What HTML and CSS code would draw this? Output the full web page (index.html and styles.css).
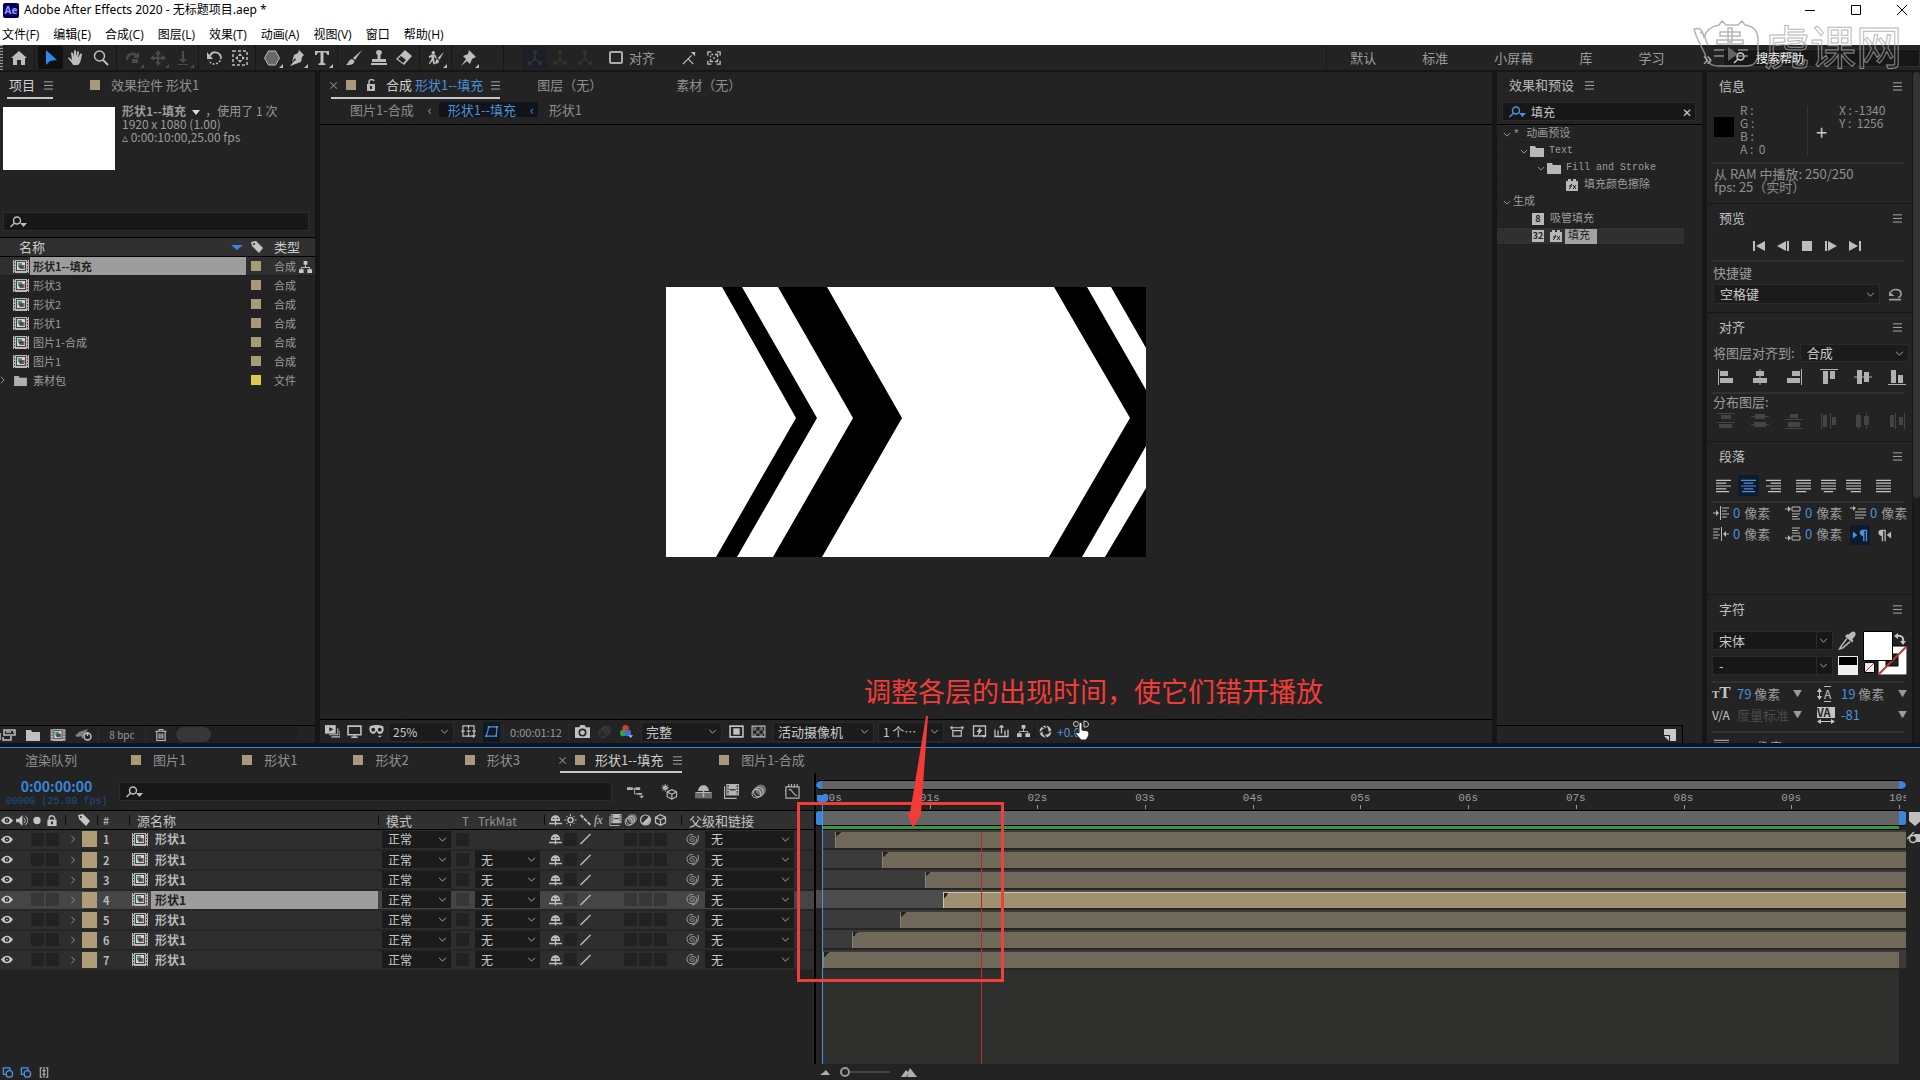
FILE: index.html
```html
<!DOCTYPE html>
<html lang="zh-CN">
<head>
<meta charset="utf-8">
<title>Adobe After Effects 2020 - 无标题项目.aep *</title>
<link rel="stylesheet" href="styles.css">
</head>
<body>
<svg class="defs" aria-hidden="true">
  <symbol id="home" viewBox="0 0 16 16"><path d="M8 1 0 8h2v7h4v-5h4v5h4V8h2z"/></symbol>
  <symbol id="arrow" viewBox="0 0 16 16"><path d="M3 0v15l4-4 7-1z"/></symbol>
  <symbol id="hand" viewBox="0 0 16 16"><path d="M5 15C4 12 1 10 0 8c1-1 2 0 4 2L3 3c0-1 1-1 2 0l1 4V1c0-1 2-1 2 0v6l1-5c0-1 2-1 2 0l-1 6 2-4c1-1 2 0 2 1-1 3-1 8-4 10z"/></symbol>
  <symbol id="zoom" viewBox="0 0 16 16"><g fill="none" stroke="currentColor"><circle cx="6.500" cy="6" r="5" stroke-width="1.500"/><path d="m10 10 5 5" stroke-width="2"/></g></symbol>
  <symbol id="orbit" viewBox="0 0 16 16"><path d="M1 10C0 4 7 0 12 4l2-2v6H8l2-2C6 4 3 6 3 10zM7 9h6v4H7z"/></symbol>
  <symbol id="track" viewBox="0 0 16 16"><path d="m8 0 3 4H9v3h3V5l4 3-4 3V9H9v3h2l-3 4-3-4h2V9H4v2L0 8l4-3v2h3V4H5z"/></symbol>
  <symbol id="dolly" viewBox="0 0 16 16"><path d="M7 1h2v8h3l-4 4-4-4h3zM3 14h10v1H3z"/></symbol>
  <symbol id="rotate" viewBox="0 0 16 16"><path d="M3 6C5 1 12 1 14 7" fill="none" stroke="currentColor" stroke-width="2"/><path d="M14 7c0 5-4 7-7 7-2 0-4-1-5-4" fill="none" stroke="currentColor" stroke-width="1.500" stroke-dasharray="2 1.500"/><path d="M0 2v7h6z"/></symbol>
  <symbol id="panbehind" viewBox="0 0 16 16"><rect x="1" y="1" width="14" height="14" fill="none" stroke="currentColor" stroke-width="1.500" stroke-dasharray="3 2"/><path d="m8 3 2 3H6zM8 13l2-3H6zM3 8l3-2v4zM13 8l-3-2v4z"/></symbol>
  <symbol id="hex" viewBox="0 0 16 16"><path d="M4.500 1h7L15.500 8l-4 7h-7L.5 8z" fill="#686868" stroke="currentColor"/></symbol>
  <symbol id="pen" viewBox="0 0 16 16"><path d="m10 0 5 5-2 2-1 5-11 4 4-5 2-1-1-2-3 4 2-7 4-2z"/></symbol>
  <symbol id="type" viewBox="0 0 16 16"><path d="M1 1h14v4h-1.500L12 2.500H9.500V13l2 .500V15h-7v-1.500l2-.500V2.500H4L2.500 5H1z"/></symbol>
  <symbol id="brush" viewBox="0 0 16 16"><path d="M16 0 9 10 7 8zM6 9l2.500 2C8 15 4 15 0 15c3-2 2-5 6-6z"/></symbol>
  <symbol id="stamp" viewBox="0 0 16 16"><path d="M8 0c3 0 4 3 1.500 5v4H15v3H1V9h5.500V5C4 3 5 0 8 0zM0 13h16v2H0z"/></symbol>
  <symbol id="eraser" viewBox="0 0 16 16"><path d="m9 0 7 6-8 9-8-6zm-7 9 5 4 3-3-5-4z" fill-rule="evenodd"/></symbol>
  <symbol id="roto" viewBox="0 0 18 16"><circle cx="6" cy="2" r="2"/><path d="M4 4h4l2 4-1 1-2-3v4l1 5H6l-1-4-3 4-1-1 3-5V7L1 8V6zM18 1l-5 9-2-2zM10 9l2.500 2c0 3-3 4-5 3 1-1 1-4 2.500-5z"/></symbol>
  <symbol id="pin" viewBox="0 0 16 16"><path d="m9 0 7 7-2 1-2 1-2 5-3-3-6 5 5-7-3-3 5-2z"/></symbol>
  <symbol id="axis" viewBox="0 0 16 16"><path d="M8 1v8M8 9l-6 5M8 9l6 5M6 3l2-2 2 2M2 11v3h3M14 11v3h-3" fill="none" stroke="currentColor" stroke-width="1.500"/></symbol>
  <symbol id="snap1" viewBox="0 0 16 16"><path d="m1 15 6-6 6 6M7 9l4-4" fill="none" stroke="currentColor" stroke-width="1.500"/><path d="M10 1h5v5z"/></symbol>
  <symbol id="snap2" viewBox="0 0 16 16"><path d="M1 5V1h4M11 1h4v4M15 11v4h-4M5 15H1v-4M4 5v2M5 4h2M9 4h3v3M4 9v3h3M12 9v3H9M7 8h2" fill="none" stroke="currentColor" stroke-width="1.500"/></symbol>
  <symbol id="menu" viewBox="0 0 10 10"><path d="M0 1.500h10M0 5.500h10M0 9.500h10" stroke="currentColor"/></symbol>
  <symbol id="chev" viewBox="0 0 10 6"><path d="m1 1 4 4 4-4" fill="none" stroke="currentColor" stroke-width="1.200"/></symbol>
  <symbol id="right" viewBox="0 0 6 10"><path d="m1 1 4 4-4 4" fill="none" stroke="currentColor" stroke-width="1.200"/></symbol>
  <symbol id="search" viewBox="0 0 18 12"><circle cx="7" cy="4.500" r="3.500" fill="none" stroke="currentColor" stroke-width="1.500"/><path d="m4.500 7-4 4" stroke="currentColor" stroke-width="1.500"/><path d="M10 7h7l-3.500 4z"/></symbol>
  <symbol id="lock" viewBox="0 0 10 12"><path d="M0 5h10v7H0z"/><path d="M2 5V3c0-3 5-3 6 0v2" fill="none" stroke="currentColor" stroke-width="1.500"/><path d="M4 7h2v3H4z" fill="#222"/></symbol>
  <symbol id="unlock" viewBox="0 0 10 12"><path d="M1 5h8v7H1z"/><path d="M3 5V3c0-3 4-3 5-1" fill="none" stroke="currentColor" stroke-width="1.500"/><path d="M4 7h2v3H4z" fill="#222"/></symbol>
  <symbol id="tag" viewBox="0 0 12 12"><path d="M0 1 5 0l7 7-4 5-7-7z"/><circle cx="3" cy="3" r="1" fill="#222"/></symbol>
  <symbol id="comp" viewBox="0 0 16 13"><path fill="#b9b9b9" d="M0 0h16v13H0z"/><path d="M1.500 0v13M14.500 0v13" stroke="#333" stroke-dasharray="1.500 1.500"/><path fill="#444" d="M3 1h10v10H3z"/><path fill="#d4d4d4" d="M4 2h8v8H4z"/><path fill="#4d8f88" d="M5 3h4v4H5z"/><path fill="#a4503f" d="M9 5h2.500v4H9z"/><circle cx="8" cy="7" r="2" fill="#35544f"/></symbol>
  <symbol id="folder" viewBox="0 0 14 12"><path d="M0 1h5l1 2h8v9H0z"/></symbol>
  <symbol id="flow" viewBox="0 0 14 14"><path d="M5 0h4v4H5zM0 9h5v4H0zM9 9h5v4H9z"/><path d="M7 4v3M2.500 9V7h9v2" fill="none" stroke="currentColor"/></symbol>
  <symbol id="interpret" viewBox="0 0 16 12"><path d="M4 1h11v5H4zM6 3h5M13 3h1M0 4v7M3 8v3h8V7" fill="none" stroke="currentColor" stroke-width="1.500"/></symbol>
  <symbol id="rocket" viewBox="0 0 18 12"><path d="M0 7 4 3l9-3-4 6-2 4-1-3-3 1z" opacity=".6"/><circle cx="12.500" cy="7.500" r="3.500" fill="none" stroke="currentColor" stroke-width="1.500"/><path d="M12.500 3v4" stroke="currentColor" stroke-width="1.500"/></symbol>
  <symbol id="trash" viewBox="0 0 12 13"><path d="M0 2.500h12M4 2V.5h4V2M1.500 3v9.500h9V3M4 5v5.500M6 5v5.500M8 5v5.500" fill="none" stroke="currentColor" stroke-width="1.200"/></symbol>
  <symbol id="frames" viewBox="0 0 14 12"><path d="M0 0h10v8H0z"/><path d="m4 2 4 2-4 2z" fill="#222"/><path d="M12 3v6H4M14 5v6H6" fill="none" stroke="currentColor"/></symbol>
  <symbol id="monitor" viewBox="0 0 14 12"><path d="M1 1h12v8H1zM4 11.500h6M7 9v2" fill="none" stroke="currentColor" stroke-width="1.500"/></symbol>
  <symbol id="goggles" viewBox="0 0 16 13"><path d="M1 1c4-2 10-2 14 0 2 5-1 9-5 8L8 6 6 9C2 9-1 6 1 1z"/><circle cx="4.500" cy="4.500" r="2" fill="#222"/><circle cx="11.500" cy="4.500" r="2" fill="#222"/><path d="M9 11h5l-2.500 2z"/></symbol>
  <symbol id="grid" viewBox="0 0 16 14"><path d="M2 1h12v11H2zM8 0v4M8 9v4M0 6.500h4M12 6.500h4M6 6.500h4M8 5v3" fill="none" stroke="currentColor" stroke-width="1.300"/><path d="M11 11h5l-2.500 3z"/></symbol>
  <symbol id="mask" viewBox="0 0 16 14"><path d="M5 2h9l-1 10H2C4 9 4 5 5 2z" fill="none" stroke="currentColor" stroke-width="1.300"/><path d="M4 1h2v2H4zM13 1h2v2h-2zM1 11h2v2H1zM12 11h2v2h-2z"/></symbol>
  <symbol id="camera" viewBox="0 0 14 12"><path d="M0 2h4l1-2h4l1 2h4v10H0z"/><circle cx="7" cy="7" r="3" fill="none" stroke="#222" stroke-width="1.500"/></symbol>
  <symbol id="rgb" viewBox="0 0 14 14"><circle cx="6" cy="3.500" r="3.500" fill="#d33a30"/><circle cx="3.500" cy="8.500" r="3.500" fill="#35a04a"/><circle cx="8.500" cy="8.500" r="3.500" fill="#3c70d8"/><path d="M9 11h5l-2.500 3z"/></symbol>
  <symbol id="roi" viewBox="0 0 14 12"><path d="M1 1h12v10H1z" fill="none" stroke="currentColor" stroke-width="1.500"/><path d="M4 3h6v6H4z"/></symbol>
  <symbol id="checker" viewBox="0 0 14 12"><path d="M1 1h12v10H1z" fill="none" stroke="currentColor"/><path d="M2 2h3v3H2zM8 2h3v3H8zM5 5h3v3H5zM2 8h3v3H2zM8 8h3v3H8zM11 5h2v3h-2z" opacity=".5"/></symbol>
  <symbol id="par" viewBox="0 0 16 12"><path d="M0 2h15M3 5h9v6H3zM2 0v4M13 0v4" fill="none" stroke="currentColor" stroke-width="1.300"/></symbol>
  <symbol id="fast" viewBox="0 0 14 13"><path d="M1 1h12v10H1z" fill="none" stroke="currentColor" stroke-width="1.300"/><path d="M8 2 4 7h2l-1 4 5-6H8zM9 10h5l-2.500 3z"/></symbol>
  <symbol id="chart" viewBox="0 0 15 12"><path d="M1 4v7h13V4M4 10V5M7.500 8V0M11 10V5M5.500 2l2-2 2 2" fill="none" stroke="currentColor" stroke-width="1.300"/></symbol>
  <symbol id="aperture" viewBox="0 0 12 12"><circle cx="6" cy="6" r="4.200" fill="none" stroke="currentColor" stroke-width="2.500"/><path d="m6 0 2 4M12 5 8 8M7 12 4 8M0 8l4-4M2 1l5 3" stroke="#222"/></symbol>
  <symbol id="preset" viewBox="0 0 12 12"><path d="M0 2h2V0h3v2h2V0h3v2h2v10H0z"/><path d="M3 10c2 0 1-5 3-5M3 7h3M7 6l3 4M10 6l-3 4" fill="none" stroke="#222"/></symbol>
  <symbol id="newcomp" viewBox="0 0 12 12"><path d="M0 0h12v12H6V6H0z"/><path d="M0 7h5v5z"/></symbol>
  <symbol id="first" viewBox="0 0 12 10"><path d="M0 0h2v10H0zM12 0v10L3 5z"/></symbol>
  <symbol id="prev" viewBox="0 0 12 10"><path d="M9 0v10L0 5zM10 0h2v10h-2z"/></symbol>
  <symbol id="next" viewBox="0 0 12 10"><path d="M0 0h2v10H0zM3 0v10l9-5z"/></symbol>
  <symbol id="last" viewBox="0 0 12 10"><path d="M0 0v10l9-5zM10 0h2v10h-2z"/></symbol>
  <symbol id="reset" viewBox="0 0 14 13"><path d="M2 4c2-4 11-4 11 2 0 2-1 3-3 4M0 12h13" fill="none" stroke="currentColor" stroke-width="1.700"/><path d="M0 3v5h6z"/></symbol>
  <symbol id="al" viewBox="0 0 18 18"><path d="M1 1h1v16H1zM3 3h8v5H3zM3 10h13v5H3z"/></symbol>
  <symbol id="ac" viewBox="0 0 18 18"><path d="M8.500 1h1v16h-1zM5 3h8v5H5zM2 10h14v5H2z"/></symbol>
  <symbol id="ar" viewBox="0 0 18 18"><path d="M16 1h1v16h-1zM7 3h8v5H7zM2 10h13v5H2z"/></symbol>
  <symbol id="at" viewBox="0 0 18 18"><path d="M0 1h18v1H0zM3 3h5v13H3zM10 3h5v8h-5z"/></symbol>
  <symbol id="am" viewBox="0 0 18 18"><path d="M0 8.500h18v1H0zM3 2h5v14H3zM10 4h5v10h-5z"/></symbol>
  <symbol id="ab" viewBox="0 0 18 18"><path d="M0 16h18v1H0zM3 2h5v13H3zM10 7h5v8h-5z"/></symbol>
  <symbol id="dv" viewBox="0 0 18 18"><path d="M0 1h18v1H0zM4 3h10v4H4zM0 10h18v1H0zM2 12h13v4H2z"/></symbol>
  <symbol id="dm" viewBox="0 0 18 18"><path d="M0 4h18v1H0zM4 2h10v5H4zM0 12h18v1H0zM3 10h12v5H3z"/></symbol>
  <symbol id="db" viewBox="0 0 18 18"><path d="M0 7h18v1H0zM5 2h8v4H5zM0 16h18v1H0zM3 10h12v5H3z"/></symbol>
  <symbol id="dh" viewBox="0 0 18 18"><path d="M1 1h1v16H1zM3 3h4v12H3zM10 1h1v16h-1zM12 5h4v8h-4z"/></symbol>
  <symbol id="dc" viewBox="0 0 18 18"><path d="M4 1h1v16H4zM2 3h5v12H2zM12 1h1v16h-1zM10 4h5v9h-5z"/></symbol>
  <symbol id="dr" viewBox="0 0 18 18"><path d="M7 1h1v16H7zM2 3h4v12H2zM16 1h1v16h-1zM11 5h4v8h-4z"/></symbol>
  <symbol id="pl" viewBox="0 0 16 14"><path d="M0 1h16M0 4h11M0 7h16M0 10h11M0 13h14" stroke="currentColor" stroke-width="1.300"/></symbol>
  <symbol id="pc" viewBox="0 0 16 14"><path d="M0 1h16M3 4h10M0 7h16M3 10h10M1 13h14" stroke="currentColor" stroke-width="1.300"/></symbol>
  <symbol id="pr" viewBox="0 0 16 14"><path d="M0 1h16M5 4h11M0 7h16M5 10h11M2 13h14" stroke="currentColor" stroke-width="1.300"/></symbol>
  <symbol id="pj" viewBox="0 0 16 14"><path d="M0 1h16M0 4h16M0 7h16M0 10h16M0 13h11" stroke="currentColor" stroke-width="1.300"/></symbol>
  <symbol id="pk" viewBox="0 0 16 14"><path d="M0 1h16M0 4h16M0 7h16M0 10h16M3 13h10" stroke="currentColor" stroke-width="1.300"/></symbol>
  <symbol id="pq" viewBox="0 0 16 14"><path d="M0 1h16M0 4h16M0 7h16M0 10h16M5 13h11" stroke="currentColor" stroke-width="1.300"/></symbol>
  <symbol id="pf" viewBox="0 0 16 14"><path d="M0 1h16M0 4h16M0 7h16M0 10h16M0 13h16" stroke="currentColor" stroke-width="1.300"/></symbol>
  <symbol id="indl" viewBox="0 0 16 14"><path d="M7.500 0v14M9 2h7M9 5h5M9 8h7M9 11h5M0 7h5" stroke="currentColor"/><path d="m3 4 3 3-3 3z"/></symbol>
  <symbol id="indr" viewBox="0 0 16 14"><path d="M8.500 0v14M0 2h7M0 5h5M0 8h7M0 11h5M11 7h5" stroke="currentColor"/><path d="m13 4-3 3 3 3z"/></symbol>
  <symbol id="spb" viewBox="0 0 16 14"><path d="M7 1h8v4H7zM7 8h8M7 10.500h6M7 13h8M0 3h5" fill="none" stroke="currentColor"/><path d="M3 0l3 3-3 3z"/></symbol>
  <symbol id="spa" viewBox="0 0 16 14"><path d="M7 9h8v4H7zM7 1h8M7 3.500h6M7 6h8M0 11h5" fill="none" stroke="currentColor"/><path d="M3 8l3 3-3 3z"/></symbol>
  <symbol id="indf" viewBox="0 0 16 14"><path d="M8 3h8M5 6h11M5 9h11M5 12h9M0 2h4" stroke="currentColor"/><path d="m3 0 3 2-3 3z"/></symbol>
  <symbol id="ltr" viewBox="0 0 18 14"><path d="m1 3 5 4-5 4z"/><path d="M17 1v13h-1.500V2.500H14V14h-1.500V8C8 8 7 1 12 1z"/></symbol>
  <symbol id="rtl" viewBox="0 0 18 14"><path d="m17 3-5 4 5 4z"/><path d="M11 1v13H9.500V2.500H8V14H6.500V8C2 8 1 1 6 1z"/></symbol>
  <symbol id="dropper" viewBox="0 0 16 18"><path d="M10 3c3-4 7-3 6 1l-3 4 1 1-1 2-7-6 2-2z"/><path d="m8 7-6 8-1 2 3-1 7-6" fill="none" stroke="currentColor" stroke-width="1.500"/></symbol>
  <symbol id="arrows" viewBox="0 0 18 5"><path d="M3 2.500h12" stroke="currentColor"/><path d="M4 0v5L0 2.500zM14 0v5l4-2.500z"/></symbol>
  <symbol id="updown" viewBox="0 0 5 12"><path d="M2.500 2v8" stroke="currentColor"/><path d="M0 4h5L2.500 0zM0 8h5l-2.500 4z"/></symbol>
  <symbol id="eye" viewBox="0 0 14 10"><path d="M0 5c4-6 10-6 14 0-4 6-10 6-14 0z"/><circle cx="7" cy="5" r="2.700" fill="#222"/><circle cx="7" cy="5" r="1" /></symbol>
  <symbol id="speaker" viewBox="0 0 13 12"><path d="M0 4h3l4-4v12L3 8H0z"/><path d="M8.500 3c2 2 2 4 0 6M10 1c4 3 3 7 0 10" fill="none" stroke="currentColor"/></symbol>
  <symbol id="dot" viewBox="0 0 12 12"><circle cx="6" cy="6" r="4"/></symbol>
  <symbol id="shy" viewBox="0 0 14 12"><path d="M2 6c0-7 10-7 10 0v1H2zM0 9h14v1.500H0zM6.300 7h1.400v5H6.300z"/><path d="M4 4.500h2M8 4.500h2" stroke="#222"/></symbol>
  <symbol id="sun" viewBox="0 0 12 12"><circle cx="6" cy="6" r="2.500" fill="none" stroke="currentColor" stroke-width="1.500"/><path d="M6 0v2M6 10v2M0 6h2M10 6h2M2 2l1 1M9 9l1 1M2 10l1-1M9 3l1-1" stroke="currentColor"/></symbol>
  <symbol id="qual" viewBox="0 0 12 12"><path d="m1 1 10 10" stroke="currentColor" stroke-width="2" stroke-dasharray="4 1"/></symbol>
  <symbol id="slash" viewBox="0 0 12 12"><path d="M1 11 11 1" stroke="currentColor" stroke-width="1.500"/></symbol>
  <symbol id="film" viewBox="0 0 13 13"><path d="M2 0h11v10H2z"/><path d="M3.500 1v8M11.500 1v8" stroke="#222" stroke-dasharray="1.500 1"/><path d="M5 5h5" stroke="#222"/><path d="M.5 2v10.500H11" fill="none" stroke="currentColor"/></symbol>
  <symbol id="blur" viewBox="0 0 14 13"><circle cx="9" cy="5" r="5" opacity=".55"/><circle cx="7" cy="7" r="4.500" fill="none" stroke="currentColor"/><circle cx="5" cy="8.500" r="4" fill="none" stroke="currentColor"/></symbol>
  <symbol id="adj" viewBox="0 0 12 12"><circle cx="6" cy="6" r="5" fill="none" stroke="currentColor" stroke-width="1.200"/><path d="M9.500 2.500a5 5 0 0 1-7 7z"/></symbol>
  <symbol id="cube" viewBox="0 0 12 12"><path d="m6 .7 5 2.500v5.600l-5 2.500-5-2.500V3.200zM1 3.200l5 2.500 5-2.500M6 5.700v5.600" fill="none" stroke="currentColor" stroke-width="1.200"/></symbol>
  <symbol id="whip" viewBox="0 0 13 13"><path d="M6 6.500c0-1.500 2-1 2 .5 0 2.200-4 2-4-.5 0-4.200 6.500-3.800 6.500 0 0 5.500-9.500 5.500-9.500 0C1 3 4 1 7 1.500M12 2c1 4 0 9-6 10" fill="none" stroke="currentColor"/></symbol>
  <symbol id="mini" viewBox="0 0 18 14"><path d="M0 2h6v3H0zM9 2h5v3H9zM11 8h5v2h-5zM13 11h5l-2.500 3z"/><path d="M5 3.500h5M8 3.500V9h4" fill="none" stroke="currentColor"/></symbol>
  <symbol id="draft" viewBox="0 0 17 17"><circle cx="4" cy="4" r="2.500"/><path d="M4 0v8M0 4h8M1 1l6 6M1 7l6-6" stroke="currentColor"/><path d="m11 6 5 2.500v5L11 16l-5-2.500v-5zM6 8.500l5 2.500 5-2.500M11 11v5" fill="none" stroke="currentColor" stroke-width="1.300"/></symbol>
  <symbol id="hideshy" viewBox="0 0 16 14"><path d="M0 7h16v6H0z" opacity=".5"/><path d="M3 6c0-7 10-7 10 0zM7.300 5h1.400v7H7.300zM1 7h14v1H1z"/></symbol>
  <symbol id="graph" viewBox="0 0 16 16"><path d="M1 3h14v12H1zM4 0v3M7 0v3M10 0v3M13 0v3M0 7h1M0 11h1M4 6h2l5 6h2" fill="none" stroke="currentColor" stroke-width="1.200"/></symbol>
  <symbol id="marker" viewBox="0 0 12 14"><path d="M0 0h12v9l-6 5-6-5z"/></symbol>
  <symbol id="smalls" viewBox="0 0 12 12"><path d="M1 1h7v7H1z" fill="none" stroke="currentColor" stroke-width="1.500"/><circle cx="7.500" cy="7.500" r="3.500" fill="#222" stroke="currentColor" stroke-width="1.500"/></symbol>
  <symbol id="compbtn" viewBox="0 0 13 14"><path d="M7 3h6v8H9z"/><circle cx="6" cy="8" r="3.500" fill="#232323" stroke="currentColor" stroke-width="1.500"/><path d="m0 8 7-7" stroke="currentColor" stroke-width="1.500"/></symbol>
  <symbol id="brace" viewBox="0 0 12 12"><path d="M4 1H2v10h2M8 1h2v10H8M6 0v12M4 4h4M4 8h4" fill="none" stroke="currentColor" stroke-width="1.300"/></symbol>
</svg>

<header class="window-top">
  <div class="title-bar">
    <span class="app-badge">Ae</span><h1>Adobe After Effects 2020 - 无标题项目.aep *</h1>
    <div class="window-controls">
      <button aria-label="最小化"><svg viewBox="0 0 12 12"><path d="M1 6.500h10" stroke="#000"/></svg></button>
      <button aria-label="最大化"><svg viewBox="0 0 12 12"><path d="M1.500 1.500h9v9h-9z" fill="none" stroke="#000"/></svg></button>
      <button aria-label="关闭"><svg viewBox="0 0 12 12"><path d="m1 1 10 10M11 1 1 11" stroke="#000"/></svg></button>
    </div>
  </div>
  <nav class="menu-bar">
    <button>文件(F)</button><button>编辑(E)</button><button>合成(C)</button><button>图层(L)</button><button>效果(T)</button><button>动画(A)</button><button>视图(V)</button><button>窗口</button><button>帮助(H)</button>
  </nav>
  <div class="watermark" aria-hidden="true">
    <svg viewBox="0 0 72 48"><path d="M2 9c8-2 9 3 10 9 2-9 9-12 15-13l3-4 4 4h12l4-4 3 4c8 1 13 6 13 15v14c0 8-5 12-12 12H27c-9 0-13-4-14-12C10 27 4 18 2 9zM8 12c6 2 5 8 8 13M28 12h20v4H28zM36 8v14h4V8zM25 20h26v4H25zM22 30h10M22 36h10M46 30h10M46 36h10"/><path class="play-mark" d="m36 27 10 7-10 7z"/></svg>
    <span>虎课网</span>
  </div>
</header>

<div class="toolbar">
  <i class="grip"></i>
  <button class="tool" aria-label="主页"><svg><use href="#home"/></svg></button><i class="sep"></i>
  <button class="tool active" aria-label="选取"><svg><use href="#arrow"/></svg></button>
  <button class="tool" aria-label="手形"><svg><use href="#hand"/></svg></button>
  <button class="tool" aria-label="缩放"><svg><use href="#zoom"/></svg></button><i class="sep"></i>
  <button class="tool off more" aria-label="轨道"><svg><use href="#orbit"/></svg></button>
  <button class="tool off more" aria-label="跟踪"><svg><use href="#track"/></svg></button>
  <button class="tool off more" aria-label="推拉"><svg><use href="#dolly"/></svg></button><i class="sep"></i>
  <button class="tool" aria-label="旋转"><svg><use href="#rotate"/></svg></button>
  <button class="tool" aria-label="锚点"><svg><use href="#panbehind"/></svg></button><i class="sep"></i>
  <button class="tool more" aria-label="形状"><svg><use href="#hex"/></svg></button>
  <button class="tool more" aria-label="钢笔"><svg><use href="#pen"/></svg></button>
  <button class="tool more" aria-label="文字"><svg><use href="#type"/></svg></button><i class="sep"></i>
  <button class="tool" aria-label="画笔"><svg><use href="#brush"/></svg></button>
  <button class="tool" aria-label="图章"><svg><use href="#stamp"/></svg></button>
  <button class="tool" aria-label="橡皮擦"><svg><use href="#eraser"/></svg></button><i class="sep"></i>
  <button class="tool more" aria-label="Roto"><svg><use href="#roto"/></svg></button><i class="sep"></i>
  <button class="tool more" aria-label="人偶"><svg><use href="#pin"/></svg></button>
  <i class="sep wide"></i>
  <button class="tool dim on" aria-label="本地轴"><svg><use href="#axis"/></svg></button>
  <button class="tool dim" aria-label="世界轴"><svg><use href="#axis"/></svg></button>
  <button class="tool dim" aria-label="视图轴"><svg><use href="#axis"/></svg></button>
  <label class="snap"><input type="checkbox">对齐</label>
  <button class="tool small" aria-label="吸附边缘"><svg><use href="#snap1"/></svg></button>
  <button class="tool small" aria-label="吸附要素"><svg><use href="#snap2"/></svg></button>
  <nav class="spaces"><button>默认</button><button>标准</button><button>小屏幕</button><button>库</button><button>学习</button><button class="raquo">»</button></nav>
  <label class="help"><svg viewBox="0 0 12 12"><circle cx="7.500" cy="4.500" r="3.500" fill="none" stroke="currentColor" stroke-width="1.500"/><path d="m5 7-4 4" stroke="currentColor" stroke-width="1.500"/></svg><input aria-label="搜索帮助" value="搜索帮助"></label>
</div>

<main class="workspace">
  <section class="panel project">
    <div class="tabs">
      <button class="tab current first">项目<svg class="m"><use href="#menu"/></svg></button>
      <button class="tab second"><i class="chip"></i>效果控件 形状1</button>
    </div>
    <div class="preview-info">
      <div class="thumb"></div>
      <div class="facts"><p><b>形状1--填充</b> <i class="tri"></i> ，使用了 1 次</p><p>1920 x 1080 (1.00)</p><p>▵ 0:00:10:00,25.00 fps</p></div>
    </div>
    <label class="search"><svg><use href="#search"/></svg><input aria-label="搜索项目"></label>
    <table class="assets">
      <colgroup><col><col class="c-tag"><col class="c-type"></colgroup>
      <thead><tr><th><div class="name-head">名称<i class="tri blue"></i></div></th><th><svg class="tagi"><use href="#tag"/></svg></th><th class="ty">类型</th></tr></thead>
      <tbody>
      <tr class="sel"><td><div class="asset"><svg><use href="#comp"/></svg><span>形状1--填充</span></div></td><td><i class="chip"></i></td><td class="ty">合成<svg class="flow"><use href="#flow"/></svg></td></tr>
      <tr><td><div class="asset"><svg><use href="#comp"/></svg><span>形状3</span></div></td><td><i class="chip"></i></td><td class="ty">合成</td></tr>
      <tr><td><div class="asset"><svg><use href="#comp"/></svg><span>形状2</span></div></td><td><i class="chip"></i></td><td class="ty">合成</td></tr>
      <tr><td><div class="asset"><svg><use href="#comp"/></svg><span>形状1</span></div></td><td><i class="chip"></i></td><td class="ty">合成</td></tr>
      <tr><td><div class="asset"><svg><use href="#comp"/></svg><span>图片1-合成</span></div></td><td><i class="chip"></i></td><td class="ty">合成</td></tr>
      <tr><td><div class="asset"><svg><use href="#comp"/></svg><span>图片1</span></div></td><td><i class="chip"></i></td><td class="ty">合成</td></tr>
      <tr><td><div class="asset dir"><svg class="tw"><use href="#right"/></svg><svg><use href="#folder"/></svg><span>素材包</span></div></td><td><i class="chip yellow"></i></td><td class="ty">文件</td></tr>
      </tbody>
    </table>
    <footer class="project-foot">
      <button aria-label="解释素材"><svg><use href="#interpret"/></svg></button><button aria-label="新建文件夹"><svg><use href="#folder"/></svg></button><button aria-label="新建合成"><svg><use href="#comp"/></svg></button><button aria-label="项目设置"><svg><use href="#rocket"/></svg></button><button class="bpc">8 bpc</button><button aria-label="删除"><svg><use href="#trash"/></svg></button><div class="hbar"><i></i></div>
    </footer>
  </section>

  <section class="panel viewer">
    <div class="tabs">
      <button class="tab current comp-tab"><span class="x">×</span><i class="chip"></i><svg class="lk"><use href="#unlock"/></svg><span>合成 <em>形状1--填充</em></span><svg class="m"><use href="#menu"/></svg></button>
      <button class="tab t-layer">图层（无）</button><button class="tab">素材（无）</button>
    </div>
    <nav class="crumbs"><a href="#a">图片1-合成</a><span>‹</span><a href="#b" class="here">形状1--填充<span>‹</span></a><a href="#c">形状1</a></nav>
    <div class="stage">
      <svg class="canvas" viewBox="0 0 480 270"><path fill="#fff" d="M0 0h480v270H0z"/><path d="M56 0h20l75 131-80 139H50l80-139zM112 0h49l75 131-80 139h-49l80-139zM388 0h33l59 103v56l-64 111h-33l81-139zM445 0h35v61zM480 201v69h-41z"/></svg>
    </div>
    <footer class="view-foot">
      <button aria-label="始终预览"><svg><use href="#frames"/></svg></button><button aria-label="主查看器"><svg><use href="#monitor"/></svg></button><button aria-label="沉浸"><svg><use href="#goggles"/></svg></button>
      <span class="combo w66"><select aria-label="放大率"><option>25%</option></select><svg><use href="#chev"/></svg></span>
      <button class="g" aria-label="网格"><svg><use href="#grid"/></svg></button><button class="blue-on" aria-label="蒙版"><svg><use href="#mask"/></svg></button>
      <span class="tc">0:00:01:12</span>
      <button aria-label="快照"><svg><use href="#camera"/></svg></button><button class="off" aria-label="显示快照"><svg><use href="#blur"/></svg></button><button aria-label="通道"><svg><use href="#rgb"/></svg></button>
      <span class="combo w81"><select aria-label="分辨率"><option>完整</option></select><svg><use href="#chev"/></svg></span>
      <button aria-label="目标区域"><svg><use href="#roi"/></svg></button><button aria-label="透明网格"><svg><use href="#checker"/></svg></button>
      <span class="combo w101"><select aria-label="3D 视图"><option>活动摄像机</option></select><svg><use href="#chev"/></svg></span>
      <span class="combo w66 views"><select aria-label="视图布局"><option>1 个…</option></select><svg><use href="#chev"/></svg></span>
      <button aria-label="像素长宽比"><svg><use href="#par"/></svg></button><button aria-label="快速预览"><svg><use href="#fast"/></svg></button><button aria-label="时间轴"><svg><use href="#chart"/></svg></button><button aria-label="流程图"><svg><use href="#flow"/></svg></button>
      <button class="ap" aria-label="曝光"><svg><use href="#aperture"/></svg></button><span class="exp">+0.0</span>
    </footer>
  </section>

  <section class="panel effects">
    <div class="tabs"><button class="tab">效果和预设<svg class="m"><use href="#menu"/></svg></button></div>
    <label class="search fx"><svg><use href="#search"/></svg><input aria-label="搜索效果" value="填充"><span>✕</span></label>
    <ul class="tree">
      <li class="l0"><svg class="cv"><use href="#chev"/></svg>* 动画预设</li>
      <li class="l1"><svg class="cv"><use href="#chev"/></svg><svg class="fo"><use href="#folder"/></svg>Text</li>
      <li class="l2"><svg class="cv"><use href="#chev"/></svg><svg class="fo"><use href="#folder"/></svg>Fill and Stroke</li>
      <li class="l3"><svg class="br"><use href="#preset"/></svg>填充颜色擦除</li>
      <li class="l0"><svg class="cv"><use href="#chev"/></svg>生成</li>
      <li class="l4"><b class="brick">8</b>吸管填充</li>
      <li class="l4 sel"><b class="brick">32</b><svg class="br"><use href="#preset"/></svg><mark>填充</mark></li>
    </ul>
    <footer class="fx-foot"><button aria-label="新建预设"><svg><use href="#newcomp"/></svg></button></footer>
  </section>

  <aside class="side">
    <div class="stack">
      <section class="panel info">
        <h2>信息<svg class="m"><use href="#menu"/></svg></h2>
        <div class="info-grid"><i class="black"></i><dl><dt>R :</dt><dt>G :</dt><dt>B :</dt><dt>A :&nbsp; 0</dt></dl><i class="vline"></i><span class="plus">+</span><dl class="xy"><dt>X : -1340</dt><dt>Y :&nbsp; 1256</dt></dl></div>
        <hr>
        <p>从 RAM 中播放: 250/250</p><p>fps: 25（实时）</p>
      </section>
      <section class="panel play">
        <h2>预览<svg class="m"><use href="#menu"/></svg></h2>
        <div class="transport"><button aria-label="第一帧"><svg><use href="#first"/></svg></button><button aria-label="上一帧"><svg><use href="#prev"/></svg></button><button aria-label="停止"><svg viewBox="0 0 12 10"><path d="M1 0h10v10H1z"/></svg></button><button aria-label="下一帧"><svg><use href="#next"/></svg></button><button aria-label="最后一帧"><svg><use href="#last"/></svg></button></div>
        <hr>
        <label class="key" for="key">快捷键</label>
        <div class="key-row"><span class="combo"><select id="key"><option>空格键</option></select><svg><use href="#chev"/></svg></span><button aria-label="重置"><svg><use href="#reset"/></svg></button></div>
      </section>
      <section class="panel align">
        <h2>对齐<svg class="m"><use href="#menu"/></svg></h2>
        <div class="align-to"><label for="alignto">将图层对齐到:</label><span class="combo"><select id="alignto"><option>合成</option></select><svg><use href="#chev"/></svg></span></div>
        <div class="icons6"><button aria-label="左对齐"><svg><use href="#al"/></svg></button><button aria-label="水平居中"><svg><use href="#ac"/></svg></button><button aria-label="右对齐"><svg><use href="#ar"/></svg></button><button aria-label="顶对齐"><svg><use href="#at"/></svg></button><button aria-label="垂直居中"><svg><use href="#am"/></svg></button><button aria-label="底对齐"><svg><use href="#ab"/></svg></button></div>
        <hr>
        <p>分布图层:</p>
        <div class="icons6 off"><button aria-label="按顶分布"><svg><use href="#dv"/></svg></button><button aria-label="垂直分布"><svg><use href="#dm"/></svg></button><button aria-label="按底分布"><svg><use href="#db"/></svg></button><button aria-label="按左分布"><svg><use href="#dh"/></svg></button><button aria-label="水平分布"><svg><use href="#dc"/></svg></button><button aria-label="按右分布"><svg><use href="#dr"/></svg></button></div>
      </section>
      <section class="panel para">
        <h2>段落<svg class="m"><use href="#menu"/></svg></h2>
        <div class="para-icons"><button aria-label="左"><svg><use href="#pl"/></svg></button><button class="on" aria-label="中"><svg><use href="#pc"/></svg></button><button aria-label="右"><svg><use href="#pr"/></svg></button><button class="gap" aria-label="末行左"><svg><use href="#pj"/></svg></button><button aria-label="末行中"><svg><use href="#pk"/></svg></button><button aria-label="末行右"><svg><use href="#pq"/></svg></button><button class="gap" aria-label="全部"><svg><use href="#pf"/></svg></button></div>
        <hr>
        <div class="fields">
          <span><svg><use href="#indl"/></svg><em>0</em> 像素</span><span><svg><use href="#spb"/></svg><em>0</em> 像素</span><span><svg><use href="#indf"/></svg><em>0</em> 像素</span>
          <span><svg><use href="#indr"/></svg><em>0</em> 像素</span><span><svg><use href="#spa"/></svg><em>0</em> 像素</span><span class="dirs"><button class="on" aria-label="从左到右"><svg><use href="#ltr"/></svg></button><button aria-label="从右到左"><svg><use href="#rtl"/></svg></button></span>
        </div>
      </section>
      <section class="panel chars">
        <h2>字符<svg class="m"><use href="#menu"/></svg></h2>
        <div class="font-grid">
          <span class="combo box"><select aria-label="字体"><option>宋体</option></select><svg><use href="#chev"/></svg></span><svg class="drop"><use href="#dropper"/></svg>
          <span class="combo box"><select aria-label="样式"><option>-</option></select><svg><use href="#chev"/></svg></span><i class="bw"></i>
          <svg class="swatches" viewBox="0 0 44 44"><path d="M15 15h29v29H15z" fill="#fff" stroke="#000"/><path d="M23 23h12v12H23z" fill="#222" stroke="#000"/><path d="M16 43 43 16" stroke="#b33a34" stroke-width="2"/><path d="M.5.5h29v29H.5z" fill="#fff" stroke="#000"/><path d="M1.500 31.500h10v10h-10z" fill="#eee" stroke="#000"/><path d="m2 41 9-9" stroke="#b33a34"/><g transform="translate(31 2)"><path d="M3 3c5-1 7 2 6 6" fill="none" stroke="#c4c4c4" stroke-width="2"/><path d="M4 0v6L0 3zM6 8h6l-3 4z" fill="#c4c4c4"/></g></svg>
        </div>
        <hr>
        <div class="metrics">
          <b class="ic serif"><small>T</small>T</b><span><em>79</em> 像素</span><i>▼</i><b class="ic lead"><svg><use href="#updown"/></svg><u>A</u></b><span><em>19</em> 像素</span><i>▼</i>
          <b class="ic">V/A</b><span class="dimt">度量标准</span><i>▼</i><b class="ic inv">VA<svg><use href="#arrows"/></svg></b><span><em>-81</em></span><i>▼</i>
        </div>
        <hr>
        <div class="cut"><svg><use href="#pf"/></svg><span>- 像素</span><span>-</span></div>
      </section>
    </div>
    <div class="vscroll"><i></i></div>
  </aside>
</main>

<section class="timeline">
  <div class="tl-tabs">
    <button class="tab">渲染队列</button><button class="tab"><i class="chip"></i>图片1</button><button class="tab"><i class="chip"></i>形状1</button><button class="tab"><i class="chip"></i>形状2</button><button class="tab"><i class="chip"></i>形状3</button><button class="tab current"><span class="x">×</span><i class="chip"></i>形状1--填充<svg class="m"><use href="#menu"/></svg></button><button class="tab"><i class="chip"></i>图片1-合成</button>
  </div>
  <div class="tl-body">
    <div class="tl-left">
      <div class="tl-tools">
        <div class="clock"><b>0:00:00:00</b><span>00000 (25.00 fps)</span></div>
        <label class="search"><svg><use href="#search"/></svg><input aria-label="搜索图层"></label>
        <div class="tl-icons"><button aria-label="迷你流程图"><svg><use href="#mini"/></svg></button><button aria-label="草图 3D"><svg><use href="#draft"/></svg></button><button aria-label="消隐"><svg><use href="#hideshy"/></svg></button><button aria-label="帧混合"><svg><use href="#film"/></svg></button><button aria-label="运动模糊"><svg><use href="#blur"/></svg></button><button aria-label="图表编辑器"><svg><use href="#graph"/></svg></button></div>
      </div>
      <table class="layers">
        <colgroup><col class="k-av"><col class="k-lab"><col class="k-lab"><col class="k-name"><col class="k-mode"><col class="k-t"><col class="k-trk"><col class="k-sw"><col></colgroup>
        <thead><tr>
          <th><div class="av"><svg><use href="#eye"/></svg><svg><use href="#speaker"/></svg><svg><use href="#dot"/></svg><svg><use href="#lock"/></svg></div></th>
          <th class="s"><svg class="tagi"><use href="#tag"/></svg></th><th class="s num">#</th><th class="s nm">源名称</th><th class="s md">模式</th><th class="lat">T</th><th class="lat tk">TrkMat</th>
          <th class="s"><div class="sw"><svg><use href="#shy"/></svg><svg><use href="#sun"/></svg><svg><use href="#qual"/></svg><i>fx</i><svg><use href="#film"/></svg><svg><use href="#blur"/></svg><svg><use href="#adj"/></svg><svg><use href="#cube"/></svg></div></th><th class="s pa">父级和链接</th>
        </tr></thead>
        <tbody>
        <tr><td><div class="av"><svg><use href="#eye"/></svg><i></i><u></u><u></u></div></td><td><div class="lab"><svg><use href="#right"/></svg><i></i></div></td><td class="num">1</td><td><div class="ln"><svg><use href="#comp"/></svg><span>形状1</span></div></td><td class="cm"><span class="combo"><select aria-label="模式 1"><option>正常</option></select><svg><use href="#chev"/></svg></span></td><td class="ct"><u></u></td><td></td><td><div class="sw"><svg><use href="#shy"/></svg><u></u><svg><use href="#slash"/></svg><i></i><i></i><u></u><u></u><u></u></div></td><td><div class="pw"><svg><use href="#whip"/></svg><span class="combo"><select aria-label="父级 1"><option>无</option></select><svg><use href="#chev"/></svg></span></div></td></tr>
        <tr><td><div class="av"><svg><use href="#eye"/></svg><i></i><u></u><u></u></div></td><td><div class="lab"><svg><use href="#right"/></svg><i></i></div></td><td class="num">2</td><td><div class="ln"><svg><use href="#comp"/></svg><span>形状1</span></div></td><td class="cm"><span class="combo"><select aria-label="模式 2"><option>正常</option></select><svg><use href="#chev"/></svg></span></td><td class="ct"><u></u></td><td class="ck"><span class="combo"><select aria-label="遮罩 2"><option>无</option></select><svg><use href="#chev"/></svg></span></td><td><div class="sw"><svg><use href="#shy"/></svg><u></u><svg><use href="#slash"/></svg><i></i><i></i><u></u><u></u><u></u></div></td><td><div class="pw"><svg><use href="#whip"/></svg><span class="combo"><select aria-label="父级 2"><option>无</option></select><svg><use href="#chev"/></svg></span></div></td></tr>
        <tr><td><div class="av"><svg><use href="#eye"/></svg><i></i><u></u><u></u></div></td><td><div class="lab"><svg><use href="#right"/></svg><i></i></div></td><td class="num">3</td><td><div class="ln"><svg><use href="#comp"/></svg><span>形状1</span></div></td><td class="cm"><span class="combo"><select aria-label="模式 3"><option>正常</option></select><svg><use href="#chev"/></svg></span></td><td class="ct"><u></u></td><td class="ck"><span class="combo"><select aria-label="遮罩 3"><option>无</option></select><svg><use href="#chev"/></svg></span></td><td><div class="sw"><svg><use href="#shy"/></svg><u></u><svg><use href="#slash"/></svg><i></i><i></i><u></u><u></u><u></u></div></td><td><div class="pw"><svg><use href="#whip"/></svg><span class="combo"><select aria-label="父级 3"><option>无</option></select><svg><use href="#chev"/></svg></span></div></td></tr>
        <tr class="sel"><td><div class="av"><svg><use href="#eye"/></svg><i></i><u></u><u></u></div></td><td><div class="lab"><svg><use href="#right"/></svg><i></i></div></td><td class="num">4</td><td><div class="ln"><svg><use href="#comp"/></svg><span>形状1</span></div></td><td class="cm"><span class="combo"><select aria-label="模式 4"><option>正常</option></select><svg><use href="#chev"/></svg></span></td><td class="ct"><u></u></td><td class="ck"><span class="combo"><select aria-label="遮罩 4"><option>无</option></select><svg><use href="#chev"/></svg></span></td><td><div class="sw"><svg><use href="#shy"/></svg><u></u><svg><use href="#slash"/></svg><i></i><i></i><u></u><u></u><u></u></div></td><td><div class="pw"><svg><use href="#whip"/></svg><span class="combo"><select aria-label="父级 4"><option>无</option></select><svg><use href="#chev"/></svg></span></div></td></tr>
        <tr><td><div class="av"><svg><use href="#eye"/></svg><i></i><u></u><u></u></div></td><td><div class="lab"><svg><use href="#right"/></svg><i></i></div></td><td class="num">5</td><td><div class="ln"><svg><use href="#comp"/></svg><span>形状1</span></div></td><td class="cm"><span class="combo"><select aria-label="模式 5"><option>正常</option></select><svg><use href="#chev"/></svg></span></td><td class="ct"><u></u></td><td class="ck"><span class="combo"><select aria-label="遮罩 5"><option>无</option></select><svg><use href="#chev"/></svg></span></td><td><div class="sw"><svg><use href="#shy"/></svg><u></u><svg><use href="#slash"/></svg><i></i><i></i><u></u><u></u><u></u></div></td><td><div class="pw"><svg><use href="#whip"/></svg><span class="combo"><select aria-label="父级 5"><option>无</option></select><svg><use href="#chev"/></svg></span></div></td></tr>
        <tr><td><div class="av"><svg><use href="#eye"/></svg><i></i><u></u><u></u></div></td><td><div class="lab"><svg><use href="#right"/></svg><i></i></div></td><td class="num">6</td><td><div class="ln"><svg><use href="#comp"/></svg><span>形状1</span></div></td><td class="cm"><span class="combo"><select aria-label="模式 6"><option>正常</option></select><svg><use href="#chev"/></svg></span></td><td class="ct"><u></u></td><td class="ck"><span class="combo"><select aria-label="遮罩 6"><option>无</option></select><svg><use href="#chev"/></svg></span></td><td><div class="sw"><svg><use href="#shy"/></svg><u></u><svg><use href="#slash"/></svg><i></i><i></i><u></u><u></u><u></u></div></td><td><div class="pw"><svg><use href="#whip"/></svg><span class="combo"><select aria-label="父级 6"><option>无</option></select><svg><use href="#chev"/></svg></span></div></td></tr>
        <tr><td><div class="av"><svg><use href="#eye"/></svg><i></i><u></u><u></u></div></td><td><div class="lab"><svg><use href="#right"/></svg><i></i></div></td><td class="num">7</td><td><div class="ln"><svg><use href="#comp"/></svg><span>形状1</span></div></td><td class="cm"><span class="combo"><select aria-label="模式 7"><option>正常</option></select><svg><use href="#chev"/></svg></span></td><td class="ct"><u></u></td><td class="ck"><span class="combo"><select aria-label="遮罩 7"><option>无</option></select><svg><use href="#chev"/></svg></span></td><td><div class="sw"><svg><use href="#shy"/></svg><u></u><svg><use href="#slash"/></svg><i></i><i></i><u></u><u></u><u></u></div></td><td><div class="pw"><svg><use href="#whip"/></svg><span class="combo"><select aria-label="父级 7"><option>无</option></select><svg><use href="#chev"/></svg></span></div></td></tr>
        </tbody>
      </table>
    </div>
    <div class="tl-right">
      <div class="navbar"></div>
      <div class="ruler"><span>00s</span><span>01s</span><span>02s</span><span>03s</span><span>04s</span><span>05s</span><span>06s</span><span>07s</span><span>08s</span><span>09s</span><span>10s</span></div>
      <div class="workarea"></div>
      <div class="cache"></div>
      <div class="lane"><i style="margin-left:1.2%"></i></div>
      <div class="lane"><i style="margin-left:5.5%"></i></div>
      <div class="lane"><i style="margin-left:9.5%"></i></div>
      <div class="lane sel"><i style="margin-left:11.2%"></i></div>
      <div class="lane"><i style="margin-left:7.2%"></i></div>
      <div class="lane"><i style="margin-left:2.8%"></i></div>
      <div class="lane end"><i style="margin-left:0.1%"></i></div>
      <div class="empty"></div>
      <i class="cti"></i><i class="render"></i>
    </div>
    <div class="gutter"><svg class="mk"><use href="#marker"/></svg><svg><use href="#compbtn"/></svg></div>
  </div>
  <footer class="tl-foot">
    <div class="foot-left"><button aria-label="图层开关"><svg><use href="#smalls"/></svg></button><button aria-label="转换控制"><svg><use href="#smalls"/></svg></button><button class="grey" aria-label="入点出点"><svg><use href="#brace"/></svg></button></div>
    <svg class="mt s" viewBox="0 0 10 6"><path d="m0 6 4-3 2-2 4 5z"/></svg><input type="range" min="0" max="100" value="0" aria-label="缩放时间"><svg class="mt" viewBox="0 0 16 9"><path d="m0 9 5-7 2 2 2-4 7 9H6l2-4-3 4z"/></svg>
  </footer>
</section>

<div class="note">
  <p>调整各层的出现时间，使它们错开播放</p>
  <svg viewBox="0 0 16 112"><path d="M20 0h2l-7 97h1l-9 15L1 97h3z"/></svg>
  <i></i>
</div>
<svg class="cursor" viewBox="0 0 18 22"><circle cx="3" cy="5" r="2.500"/><path d="M11 2c6 0 6 7 0 6z"/><path class="f" d="M6 5c0-2 3-2 3 0v6l6 1c2 3 0 6-2 9H8c-2-3-5-5-6-8l4 1z"/></svg>
</body>
</html>
```
FILE: styles.css
```css
* { box-sizing: border-box; }
body {
  margin: 0;
  height: 100vh;
  display: grid;
  grid-template-rows: 45px 27px minmax(0, 1fr) 337px;
  grid-template-columns: minmax(0, 1fr);
  overflow: hidden;
  position: relative;
  background: #161616;
  color: #9c9c9c;
  font: 13px/16px "Noto Sans CJK SC", sans-serif;
}
.defs { position: absolute; width: 0; height: 0; }
svg { fill: currentColor; display: block; flex: none; }
button, input, select { font: inherit; color: inherit; background: none; border: 0; padding: 0; margin: 0; border-radius: 0; outline: 0; }
button { display: flex; align-items: center; justify-content: center; white-space: nowrap; }
p, h1, h2, ul, dl, dt { margin: 0; padding: 0; font-weight: 400; }
em { font-style: normal; color: #4b92dc; }
i { font-style: normal; }
u { text-decoration: none; }
table { border-collapse: collapse; table-layout: fixed; width: 100%; }
td, th { padding: 0; font-weight: 400; text-align: left; overflow: hidden; white-space: nowrap; }
hr { border: 0; height: 2px; background: #303030; margin: 0 8px 0 5px; }

/* window frame */
.window-top { background: #fff; color: #000; position: relative; font: 12px/16px "Noto Sans", "Noto Sans CJK SC", sans-serif; }
.title-bar { display: flex; align-items: center; height: 20px; padding-left: 3px; gap: 5px; }
.title-bar h1 { font-size: 12px; flex: 1; }
.app-badge { width: 16px; height: 15px; border-radius: 2px; background: #00005b; color: #9999ff; font: bold 10px/15px "Open Sans", sans-serif; text-align: center; }
.window-controls { display: flex; gap: 34px; padding-right: 12px; }
.window-controls svg { width: 12px; height: 12px; }
.menu-bar { display: flex; gap: 14px; height: 25px; padding: 4px 0 0 2px; align-items: center; font-family: "Open Sans", "Noto Sans CJK SC", sans-serif; }
.watermark { position: absolute; right: 18px; top: 20px; z-index: 5; display: flex; align-items: center; height: 48px; opacity: .8; pointer-events: none; }
.watermark svg { width: 72px; height: 48px; fill: none; stroke: #a5a5a5; stroke-width: 1.500; }
.watermark .play-mark { fill: #777; stroke: none; }
.watermark span { font: 46px/48px "Noto Sans CJK SC", sans-serif; color: transparent; -webkit-text-stroke: 1px #a8a8a8; }

/* toolbar */
.toolbar { background: #232323; display: flex; align-items: center; color: #bdbdbd; border-bottom: 2px solid #161616; }
.grip { width: 3px; height: 25px; margin-right: 3px; background: repeating-linear-gradient(#999 0 1px, #333 1px 3px); }
.tool { width: 25px; height: 23px; flex: none; position: relative; }
.tool svg { width: 16px; height: 16px; }
.tool.small svg { width: 14px; height: 14px; }
.tool.active { background: #101010; color: #2d8ceb; border-radius: 2px; }
.tool.off { color: #4a4a4a; }
.tool.dim { color: #343434; }
.tool.on { background: #1c1f26; }
.tool.more::after { content: ""; position: absolute; right: 1px; bottom: 1px; border: 2px solid transparent; border-right-color: currentColor; border-bottom-color: currentColor; }
.sep { width: 1px; height: 25px; background: #171717; margin: 0 3px; flex: none; }
.sep.wide { margin: 0 18px 0 23px; }
.snap { display: flex; align-items: center; gap: 6px; margin: 0 21px 0 12px; color: #9c9c9c; }
.snap input { appearance: none; width: 14px; height: 13px; border: 2px solid #aaa; border-radius: 2px; }
.spaces { margin-left: auto; display: flex; gap: 46px; color: #9c9c9c; border-left: 1px solid #171717; padding-left: 23px; height: 25px; }
.spaces .raquo { font-size: 20px; margin: 0 11px 0 -8px; color: #bbb; }
.help { width: 197px; height: 18px; display: flex; align-items: center; gap: 11px; padding-left: 9px; background: #171717; border: 1px solid #2c2c2c; color: #ccc; font-size: 12px; }
.help svg { width: 12px; height: 12px; }
.help input { width: 100px; color: #fff; }

/* panels */
.workspace { display: grid; grid-template-columns: 315px minmax(0, 1fr) 205px 213px; gap: 5px; min-height: 0; }
.panel { background: #232323; min-width: 0; }
.project, .viewer, .effects { display: flex; flex-direction: column; }
.tabs { display: flex; height: 27px; flex: none; }
.tab { gap: 9px; height: 27px; padding-bottom: 0; border-bottom: 2px solid transparent; color: #909090; }
.tab.current { border-color: #c8c8c8; color: #d0d0d0; }
.m { width: 9px; height: 10px; color: #b4b4b4; }
.chip { display: block; width: 10px; height: 10px; background: #a89a7a; flex: none; }
.chip.yellow { background: #dccb4e; }
.x { width: 5px; display: flex; justify-content: center; font-size: 11px; color: #999; }
.tabs .first { margin-left: 7px; padding-left: 2px; }
.tabs .second { margin-left: 37px; gap: 11px; }
.preview-info { display: flex; gap: 7px; padding: 8px 0 0 3px; height: 113px; font-size: 12px; }
.facts { margin-top: -3px; }
.facts p { white-space: nowrap; line-height: 13px; }
.thumb { width: 112px; height: 63px; background: #fff; }
.tri { display: inline-block; border: 4px solid transparent; border-top: 5px solid #ddd; border-bottom: 0; vertical-align: middle; margin: 0 3px; }
.tri.blue { border-width: 5px 6px 0; border-top-color: #3a86dd; margin: 0 3px 0 0; }
.search { display: flex; align-items: center; height: 19px; margin: 0 6px 0 3px; padding-left: 6px; gap: 6px; background: #171717; border: 1px solid #2c2c2c; color: #bcbcbc; }
.search svg { width: 18px; height: 12px; }
.search input { flex: 1; min-width: 0; height: 16px; }
.assets { margin-top: 6px; border-top: 1px solid #000; font-size: 11px; }
.c-tag { width: 22px; }
.c-type { width: 47px; }
.assets th { height: 19px; background: #303030; color: #cacaca; font-size: 13px; border-bottom: 1px solid #000; }
.assets td { height: 19px; border-bottom: 1px solid #1f1f1f; }
.assets .ty { padding-left: 6px; }
.assets .chip { margin-left: 5px; }
.name-head { display: flex; align-items: center; justify-content: space-between; padding-left: 19px; }
.tagi { width: 12px; height: 12px; margin-left: 5px; color: #c4c4c4; }
.asset { display: flex; align-items: center; padding-left: 13px; height: 18px; }
.asset svg { width: 16px; height: 13px; }
.asset span { flex: 1; padding-left: 3px; margin-left: 1px; line-height: 18px; }
.asset.dir { padding-left: 0; }
.asset .tw { width: 5px; height: 8px; margin-right: 8px; }
.asset.dir svg + svg { width: 15px; height: 11px; margin-right: 1px; color: #b0b0b0; }
.assets .sel td { background: #2f2f2f; }
.assets .sel span { background: #9d9d9d; color: #222; font-weight: 700; }
.flow { display: inline-block; width: 13px; height: 13px; vertical-align: middle; margin-left: 3px; color: #c8c8c8; }
.project-foot { margin-top: auto; height: 18px; border-top: 1px solid #000; display: flex; align-items: center; gap: 9px; color: #c0c0c0; }
.project-foot svg { width: 16px; height: 12px; }
.project-foot button:nth-child(4) svg { width: 18px; }
.bpc { font-size: 10px; color: #999; width: 48px; margin-left: -4px; border: 1px solid #2c2c2c; border-width: 0 1px; }
.bpc + button svg { width: 12px; }
.hbar { flex: 1; margin-right: 18px; height: 15px; background: #1f1f1f; }
.hbar i { display: block; width: 35px; height: 15px; border-radius: 8px; background: #373737; }

/* viewer */
.comp-tab { margin-left: 11px; gap: 10px; }
.comp-tab .m { margin-left: -2px; }
.lk { width: 10px; height: 12px; color: #bbb; }
.t-layer { margin: 0 74px 0 37px; }
.crumbs { display: flex; height: 26px; padding: 3px 0 7px 30px; border-bottom: 1px solid #000; gap: 11px; flex: none; }
.crumbs a { color: #8c8c8c; text-decoration: none; }
.crumbs > span { margin: 0 -4px 0 3px; }
.crumbs .here { background: #111418; color: #4b92dc; padding: 0 4px 0 9px; display: flex; gap: 14px; border-radius: 2px; }
.stage { flex: 1; display: grid; place-items: center; min-height: 0; }
.canvas { width: 480px; height: 270px; fill: #000; }
.view-foot { height: 24px; border-top: 1px solid #000; display: flex; align-items: center; gap: 7px; padding-left: 5px; color: #c0c0c0; flex: none; overflow: hidden; }
.view-foot button svg { width: 15px; height: 13px; }
.view-foot .off { color: #3c3c3c; }
.combo { display: grid; align-items: center; background: #1b1b1b; border: 1px solid #2b2b2b; height: 18px; color: #c8c8c8; }
.combo select { grid-area: 1 / 1; appearance: none; width: 100%; height: 16px; line-height: 16px; padding-left: 6px; }
.combo svg { grid-area: 1 / 1; width: 9px; height: 5px; justify-self: end; margin-right: 4px; color: #a8a8a8; pointer-events: none; }
.view-foot .combo { height: 20px; flex: none; }
.view-foot .combo select { padding-left: 4px; }
.w66 { width: 66px; margin: 0 -3px; }
.view-foot .w66 { font-size: 12px; }
.w81 { width: 81px; }
.w101 { width: 101px; }
.view-foot .views { margin: 0 -1px 0 -3px; }
.blue-on { color: #4b92dc; background: #101822; height: 20px; padding: 0 1px; }
.view-foot .g { margin-left: 3px; }
.tc { font-size: 11px; width: 66px; text-align: center; color: #999; border: 1px solid #2b2b2b; border-width: 0 1px; margin: 0 -1px 0 -4px; }
.ap { border-left: 1px solid #151515; padding-left: 3px; margin-left: -4px; }
.exp { font-size: 12px; color: #4b92dc; margin-left: -3px; }

/* effects */
.effects .tab { margin-left: 12px; gap: 11px; color: #b8b8b8; }
.search.fx { margin: 3px 6px 3px 5px; font-size: 12px; color: #c8c8c8; gap: 4px; }
.fx > svg { color: #4b92dc; }
.fx span { padding-right: 3px; font-size: 12px; }
.tree { list-style: none; padding-top: 1px; border-top: 1px solid #000; font: 11px/16px "Liberation Mono", "Noto Sans CJK SC", monospace; }
.tree li { height: 17px; margin-right: 18px; border-bottom: 1px solid #1f1f1f; display: flex; align-items: center; white-space: nowrap; }
.cv { width: 8px; height: 5px; margin-right: 2px; }
.fo { width: 14px; height: 12px; color: #b8b8b8; margin-right: 5px; }
.br, .brick { width: 12px; height: 12px; color: #b8b8b8; }
.brick { background: #b8b8b8; color: #222; font: bold 9px/12px "Noto Sans CJK SC", sans-serif; text-align: center; margin-right: 6px; }
.l0 { padding-left: 6px; }
.l1 { padding-left: 23px; }
.tree .l1, .tree .l2 { font-size: 10px; }
.l2 { padding-left: 40px; }
.l3 { padding-left: 69px; }
.l3 .br { margin-right: 6px; }
.l4 { padding-left: 35px; }
.tree .sel { background: #303030; }
.tree mark { background: #a3a3a3; color: #222; padding: 0 7px 0 3px; margin-left: 3px; height: 15px; line-height: 15px; }
.fx-foot { margin: auto 19px 0 0; height: 18px; border: 1px solid #000; border-width: 1px 1px 0 0; display: flex; justify-content: flex-end; padding-right: 6px; color: #c8c8c8; }
.fx-foot svg { width: 12px; height: 12px; }

/* right column */
.side { display: grid; grid-template-columns: minmax(0, 1fr) 7px; gap: 1px; min-height: 0; overflow: hidden; }
.stack { display: flex; flex-direction: column; gap: 1px; min-height: 0; overflow: hidden; }
.stack > .panel { flex: none; }
.stack h2 { display: flex; align-items: center; justify-content: space-between; height: 28px; padding: 0 10px 1px 12px; font-size: 13px; color: #c0c0c0; }
.vscroll { background: #1b1b1b; }
.vscroll i { display: block; height: 426px; background: #333; border-radius: 4px; }
.info { height: 131px; color: #8f8f8f; }
.info p { padding-left: 7px; line-height: 13px; white-space: nowrap; }
.info hr { margin-bottom: 3px; }
.info-grid { display: flex; height: 62px; padding: 3px 0 0 7px; font-size: 12px; }
.info-grid dt { line-height: 13px; white-space: nowrap; }
.black { width: 20px; height: 20px; background: #000; margin: 14px 6px 0 0; }
.info-grid dl:first-of-type { width: 67px; }
.vline { width: 1px; height: 50px; margin-top: 3px; background: #333; }
.plus { font-size: 20px; width: 13px; margin: 21px 10px 0 8px; color: #c8c8c8; }
.play { height: 108px; }
.transport { display: flex; gap: 12px; justify-content: center; height: 28px; align-items: center; color: #bdbdbd; padding-right: 5px; }
.transport svg { width: 12px; height: 10px; }
.key { display: block; padding-left: 6px; line-height: 22px; }
.key-row { display: flex; gap: 9px; padding: 0 10px 0 6px; align-items: center; }
.key-row .combo { flex: 1; height: 20px; }
.key-row svg { width: 13px; height: 13px; }
.key-row .combo svg, .align .combo svg { width: 9px; height: 5px; }
.align { height: 128px; }
.align-to { display: flex; align-items: center; padding: 3px 3px 0 6px; gap: 5px; }
.align-to label { white-space: nowrap; }
.align-to .combo { flex: 1; height: 18px; }
.icons6 { display: flex; justify-content: space-between; height: 30px; align-items: center; padding: 0 6px 0 10px; color: #b0b0b0; }
.icons6 svg { width: 18px; height: 18px; }
.icons6.off { height: 22px; color: #444; }
.align p { padding-left: 6px; line-height: 16px; }
.para { height: 152px; }
.para-icons { display: flex; height: 31px; align-items: center; gap: 4px; padding-left: 6px; color: #c4c4c4; }
.para-icons svg { width: 15px; height: 14px; }
.para-icons button { width: 21px; height: 21px; }
.para-icons .gap { margin-left: 5px; }
.para .on { background: #0d1a30; color: #4b92dc; }
.fields { display: grid; grid-template-columns: 72px 65px 1fr; padding: 0 0 0 6px; row-gap: 1px; }
.fields span { display: flex; align-items: center; height: 20px; white-space: nowrap; gap: 4px; overflow: hidden; }
.fields svg { width: 16px; height: 14px; color: #b8b8b8; }
.fields .dirs { height: 22px; gap: 4px; }
.dirs button { width: 20px; height: 20px; }
.fields .dirs .on svg { color: #4b92dc; }
.chars { height: 160px; }
.font-grid { display: grid; grid-template-columns: 121px 20px 44px; grid-template-rows: 19px 19px; gap: 6px 5px; padding: 8px 0 6px 5px; }
.font-grid .combo { height: 19px; background: linear-gradient(#2b2b2b, #2b2b2b) 103px 0 / 1px 19px no-repeat #171717; }
.drop { width: 18px; height: 19px; color: #b8b8b8; }
.bw { border: 1px solid #eee; background: linear-gradient(#000 50%, #eee 50%); }
.swatches { grid-column: 3; grid-row: 1 / 3; width: 44px; height: 44px; }
.metrics { display: grid; grid-template-columns: 25px 56px 24px 24px 57px 10px; grid-auto-rows: 21px; align-items: center; padding: 0 0 6px 5px; }
.metrics i { font-size: 9px; }
.metrics span { white-space: nowrap; }
.metrics .dimt { color: #4a4a4a; }
.ic { font-size: 12px; font-weight: 400; color: #c4c4c4; white-space: nowrap; line-height: 14px; }
.serif { font: bold 17px/18px "Liberation Serif", serif; }
.serif small { font-size: 11px; }
.lead { display: flex; gap: 2px; align-items: center; }
.lead svg { width: 5px; height: 12px; }
.lead u { border: 1px solid #b8b8b8; border-width: 1px 0; }
.inv { background: #c4c4c4; color: #222; width: 18px; height: 11px; line-height: 11px; font-size: 11px; font-weight: 700; margin-bottom: 5px; }
.inv svg { width: 18px; height: 5px; color: #c4c4c4; margin-top: 1px; }
.cut { display: flex; gap: 20px; padding: 6px 0 0 7px; }
.cut svg { width: 15px; height: 14px; }

/* timeline */
.timeline { background: #232323; border-top: 4px solid #0a1628; display: grid; grid-template-rows: 26px minmax(0, 1fr) 16px; grid-template-columns: minmax(0, 1fr); min-width: 0; }
.tl-tabs { display: flex; border-top: 1px solid #4d7fb8; padding-left: 25px; }
.tl-tabs .tab { height: 25px; gap: 12px; margin-right: 54px; }
.tl-tabs .tab + .tab { margin-right: 56px; }
.tl-tabs .tab:nth-child(5) { margin-right: 40px; }
.tl-tabs .tab.current { gap: 10px; margin-right: 37px; }
.tl-tabs .tab:last-child { margin: 0; }
.tl-body { display: grid; grid-template-columns: 816px minmax(0, 1fr) 14px; min-height: 0; }
.tl-left { border-right: 2px solid #000; box-shadow: inset -1px 0 #2b2b2b; }
.tl-tools { height: 37px; display: flex; align-items: center; }
.clock { width: 113px; padding-top: 4px; text-align: center; color: #3a86dd; }
.clock b { display: block; font-size: 14px; line-height: 17px; }
.clock span { display: block; font: 10px/14px "Liberation Mono", monospace; color: #1f4f86; white-space: nowrap; }
.tl-tools .search { width: 493px; margin: 0 15px 0 6px; }
.tl-icons { display: flex; gap: 17px; color: #b4b4b4; align-items: center; }
.tl-icons svg { width: 17px; height: 16px; }
.tl-icons button:nth-child(n+4) svg { width: 15px; height: 15px; }
.tl-icons button:nth-child(n+4) { margin-left: -5px; }
.tl-icons button:last-child { margin-left: 2px; }
.layers { border-top: 1px solid #000; width: 814px; }
.k-av { width: 65px; }
.k-lab { width: 32px; }
.k-name { width: 249px; }
.k-mode { width: 76px; }
.k-t { width: 18px; }
.k-trk { width: 72px; }
.k-sw { width: 137px; }
.layers th { height: 19px; background: #303030; border-bottom: 1px solid #000; color: #c4c4c4; line-height: 17px; }
.layers .s { background: linear-gradient(#0c0c0c, #0c0c0c) 0 4px / 1px 10px no-repeat #303030; }
.layers th .tagi { margin-left: 13px; }
.layers .num { padding-left: 6px; font-size: 11px; font-weight: 700; }
.layers th.num { font-weight: 400; }
.layers .nm, .layers .md, .layers .pa { padding-left: 8px; }
.layers .lat { color: #929292; font-size: 12px; padding-left: 8px; }
.layers th.tk { padding-left: 6px; }
.layers td { height: 20px; background: #2e2e2e; border-bottom: 2px solid #252525; color: #b8b8b8; }
.layers .sel td { background: #454545; }
.av { display: grid; grid-template-columns: repeat(4, 13px); gap: 2px; padding-left: 1px; align-items: center; }
.av svg { width: 12px; height: 11px; color: #c4c4c4; }
.layers td u { display: block; width: 13px; height: 13px; background: #222; }
.layers .sel td u { background: #363636; }
.lab { display: flex; justify-content: flex-end; align-items: center; gap: 5px; }
.lab svg { width: 6px; height: 8px; color: #999; margin-right: 1px; }
.lab i { width: 15px; height: 16px; background: #b09c76; }
.ln { display: flex; align-items: center; padding-left: 3px; gap: 3px; height: 18px; font-size: 12px; font-weight: 700; }
.ln svg { width: 16px; height: 13px; }
.ln span { flex: 1; padding-left: 4px; line-height: 18px; }
.sel .ln span { background: #9d9d9d; color: #222; }
.layers .combo { height: 17px; border: 0; background: #1b1b1b; }
.layers .combo select { font-size: 12px; }
.layers .cm { padding: 0 3px 0 4px; }
.layers .ck { padding: 0 4px 0 3px; }
.layers .ct { padding-left: 2px; }
.sw { display: grid; grid-template-columns: repeat(8, 13px); gap: 2px; padding-left: 5px; align-items: center; }
.sw svg { width: 13px; height: 12px; color: #bcbcbc; }
.sw i { font: italic 12px/12px "Liberation Serif", serif; }
.pw { display: flex; gap: 6px; padding-left: 5px; align-items: center; color: #a0a0a0; }
.pw > svg { width: 13px; height: 13px; }
.pw .combo { width: 89px; }
.tl-right { position: relative; display: flex; flex-direction: column; padding-top: 7px; overflow: hidden; }
.navbar, .workarea { border: 1px solid #000; border-width: 1px 0; background: linear-gradient(90deg, #3a86dd 6px, #646464 6px calc(100% - 7px), #3a86dd calc(100% - 7px)); border-radius: 6px; flex: none; }
.navbar { height: 10px; }
.workarea { height: 16px; border-radius: 3px; }
.ruler { display: flex; justify-content: space-between; height: 20px; padding: 0 7px 0 6px; font: 11px/16px "Liberation Mono", monospace; flex: none; }
.ruler span { width: 0; display: flex; justify-content: center; position: relative; }
.ruler span::after { content: ""; position: absolute; left: 0; bottom: 1px; width: 1px; height: 4px; background: #999; }
.ruler span:first-child { justify-content: flex-start; }
.cache { height: 4px; margin: 0 7px 0 6px; background: #2f9a41; border-bottom: 1px solid #000; flex: none; }
.lane { height: 20px; padding: 2px 0 2px 6px; flex: none; border-bottom: 2px solid #272422; background: linear-gradient(90deg, #232323 6px, #3b3b3b 6px); }
.lane i { display: block; height: 16px; background: #706959; border-left: 1px solid #8a8270; }
.lane i::before { content: ""; display: block; width: 5px; height: 5px; background: linear-gradient(135deg, #25221d 50%, transparent 50%); }
.lane.end i { margin-right: 7px; }
.lane.sel { background: #4d4d4d; }
.lane.sel i { background: #9f9070; border: 1px solid #d0c4a6; border-width: 1px 0 0 1px; }
.empty { flex: 1; margin: 0 7px 0 6px; background: #2f2f2d; }
.cti { position: absolute; left: 6px; top: 30px; bottom: 0; width: 1px; background: #4b92dc; }
.cti::before { content: ""; position: absolute; left: -5px; top: -8px; width: 11px; height: 9px; background: #3a86dd; clip-path: polygon(0 0, 100% 0, 100% 60%, 50% 100%, 0 60%); }
.render { position: absolute; left: 15.1%; top: 59px; bottom: 0; width: 1px; background: #b82c26; }
.gutter { padding: 39px 0 0 1px; color: #c0c0c0; display: flex; flex-direction: column; gap: 5px; overflow: hidden; }
.gutter svg { width: 13px; height: 14px; }
.gutter .mk { margin-left: 2px; width: 12px; }
.tl-foot { display: flex; align-items: center; color: #b0b0b0; }
.foot-left { width: 820px; display: flex; gap: 6px; padding-left: 2px; color: #4b92dc; }
.foot-left svg { width: 12px; height: 11px; }
.foot-left .grey { color: #aaa; }
.mt { width: 16px; height: 9px; }
.mt.s { width: 10px; height: 6px; }
input[type="range"] { appearance: none; width: 50px; height: 12px; margin: 0 11px 0 10px; background: linear-gradient(#444, #444) 0 50% / 100% 2px no-repeat; }
input[type="range"]::-webkit-slider-thumb { appearance: none; width: 10px; height: 10px; border: 2px solid #999; border-radius: 50%; background: #232323; }

/* tutorial annotation */
.note { position: absolute; left: 797px; top: 673px; width: 540px; color: #f23c38; pointer-events: none; }
.note p { font-size: 27px; line-height: 36px; padding-left: 67px; white-space: nowrap; }
.note svg { width: 16px; height: 112px; overflow: visible; margin: 7px 0 0 109px; }
.note i { display: block; width: 207px; height: 180px; margin-top: -26px; border: 3px solid #ee3f3a; }
.cursor { position: absolute; left: 1073px; top: 719px; width: 18px; height: 22px; fill: none; stroke: #ccc; pointer-events: none; }
.cursor .f { fill: #fff; stroke: #222; }
```
